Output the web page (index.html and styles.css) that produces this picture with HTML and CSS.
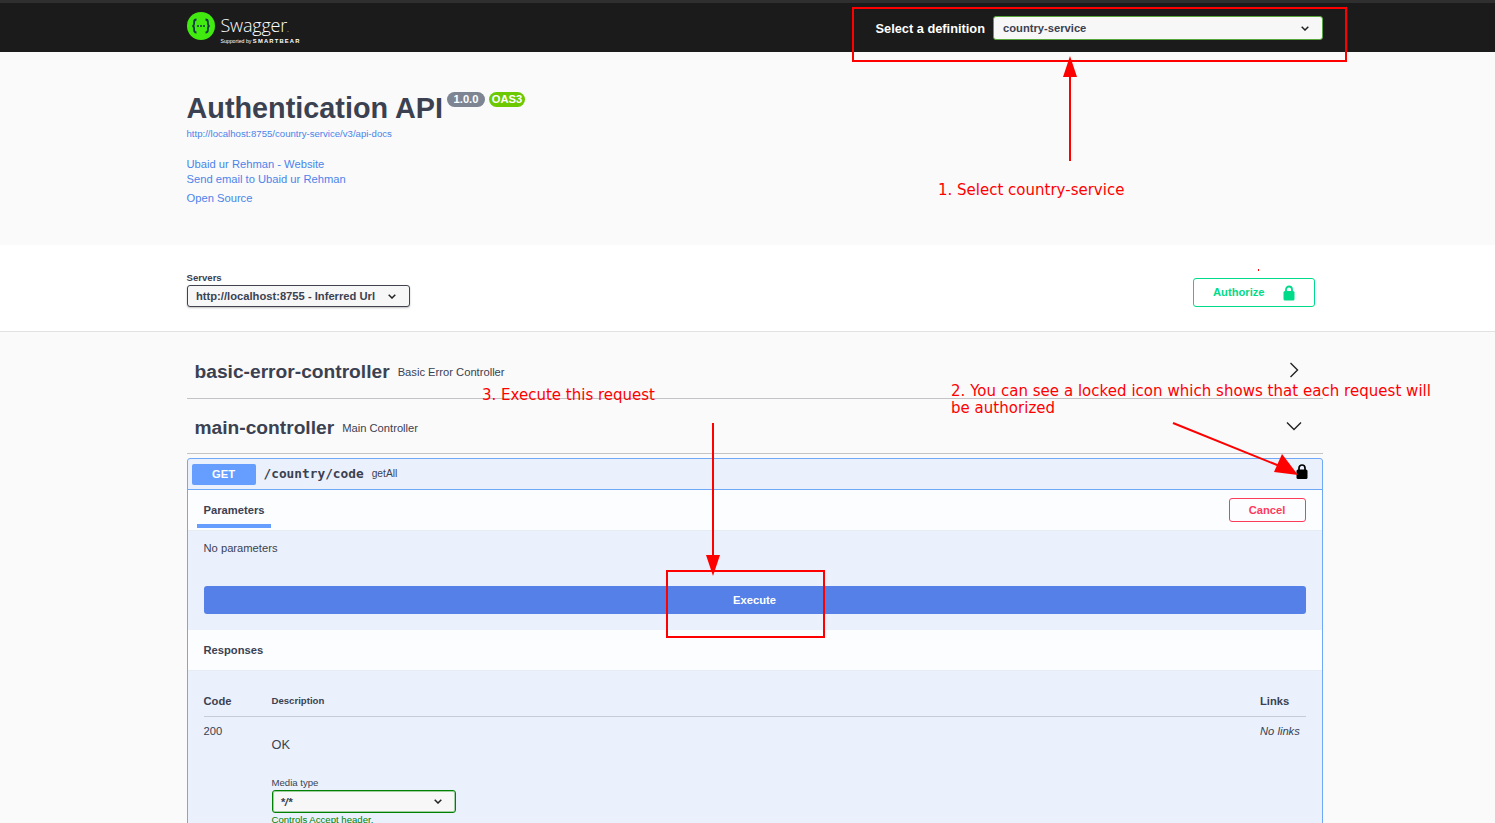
FILE: index.html
```html
<!DOCTYPE html>
<html lang="en">
<head>
    <meta charset="UTF-8">
    <meta name="viewport" content="width=device-width, initial-scale=1.0">
    <title>Swagger UI</title>
    <link rel="stylesheet" href="styles.css">
</head>
<body>
    <div class="page">
        <header class="topbar">
            <div class="wrapper topbar-inner">
                <div class="logo">
                    <svg class="logo-mark" width="28" height="28" viewBox="0 0 28 28">
                        <circle cx="14" cy="14" r="14" fill="#41ea0f"/>
                        <path d="M9.500 7.500c-2 0-2.400 1-2.400 2.500v1.800c0 1.200-.6 2-1.600 2.200 1 .2 1.600 1 1.600 2.200V18c0 1.500.4 2.500 2.400 2.500M18.500 7.500c2 0 2.400 1 2.400 2.500v1.800c0 1.200.6 2 1.600 2.200-1 .2-1.600 1-1.600 2.200V18c0 1.500-.4 2.500-2.400 2.500" fill="none" stroke="#173647" stroke-width="1.800"/>
                        <circle cx="11" cy="14" r="1" fill="#173647"/>
                        <circle cx="14" cy="14" r="1" fill="#173647"/>
                        <circle cx="17" cy="14" r="1" fill="#173647"/>
                    </svg>
                    <div class="logo-text">
                        <span class="logo-name">Swagger<span class="logo-dot">.</span></span>
                        <span class="logo-sub">Supported by <b>SMARTBEAR</b></span>
                    </div>
                </div>
                <div class="definition">
                    <span class="definition-label">Select a definition</span>
                    <div class="select select-definition">
                        <span>country-service</span>
                        <svg class="chevron" width="8" height="5" viewBox="0 0 8 5"><path d="M.7.7L4 4l3.300-3.300" fill="none" stroke="#222" stroke-width="1.500"/></svg>
                    </div>
                </div>
            </div>
        </header>

        <section class="info">
            <div class="wrapper">
                <div class="title-row">
                    <h1 class="title">Authentication API</h1>
                    <span class="badge badge-version">1.0.0</span>
                    <span class="badge badge-oas">OAS3</span>
                </div>
                <a class="link link-url">http://localhost:8755/country-service/v3/api-docs</a>
                <a class="link link-first">Ubaid ur Rehman - Website</a>
                <a class="link">Send email to Ubaid ur Rehman</a>
                <a class="link link-last">Open Source</a>
            </div>
        </section>

        <section class="schemes">
            <div class="wrapper schemes-inner">
                <div class="servers">
                    <span class="servers-label">Servers</span>
                    <div class="select select-server">
                        <span>http://localhost:8755 - Inferred Url</span>
                        <svg class="chevron" width="8" height="5" viewBox="0 0 8 5"><path d="M.7.7L4 4l3.300-3.300" fill="none" stroke="#222" stroke-width="1.500"/></svg>
                    </div>
                </div>
                <button class="btn-authorize">
                    <span>Authorize</span>
                    <svg width="12" height="16" viewBox="0 0 12 16"><path d="M3 7V4.500a3 3 0 0 1 6 0V7" fill="none" stroke="#00db8a" stroke-width="1.800"/><rect x="0.500" y="6" width="11" height="9.500" rx="1.500" fill="#00db8a"/></svg>
                </button>
            </div>
        </section>

        <main class="wrapper tags">
            <div class="tag tag-first">
                <h3 class="tag-name">basic-error-controller</h3>
                <small class="tag-desc">Basic Error Controller</small>
                <svg class="tag-arrow" width="20" height="20" viewBox="0 0 20 20"><path d="M6.500 3l7 7-7 7" fill="none" stroke="#222" stroke-width="1.400"/></svg>
            </div>
            <div class="tag tag-second">
                <h3 class="tag-name">main-controller</h3>
                <small class="tag-desc">Main Controller</small>
                <svg class="tag-arrow" width="20" height="20" viewBox="0 0 20 20"><path d="M3 6.500l7 7 7-7" fill="none" stroke="#222" stroke-width="1.400"/></svg>
            </div>

            <article class="opblock">
                <div class="op-summary">
                    <span class="op-method">GET</span>
                    <span class="op-path">/country/code</span>
                    <span class="op-id">getAll</span>
                    <svg class="op-lock" width="12" height="15" viewBox="0 0 12 15"><path d="M3 7V4a3 3 0 0 1 6 0v3" fill="none" stroke="#000" stroke-width="1.700"/><rect x="0.500" y="5.500" width="11" height="9.500" rx="1.500" fill="#000"/></svg>
                </div>
                <div class="op-section op-section-params">
                    <span class="op-tab">Parameters</span>
                    <button class="btn-cancel">Cancel</button>
                </div>
                <div class="op-body">
                    <p class="no-params">No parameters</p>
                    <button class="btn-execute">Execute</button>
                </div>
                <div class="op-section op-section-responses">
                    <span class="responses-title">Responses</span>
                </div>
                <div class="responses">
                    <div class="resp-head">
                        <span class="col-code">Code</span>
                        <span class="col-desc col-desc-head">Description</span>
                        <span class="col-links">Links</span>
                    </div>
                    <div class="resp-row">
                        <span class="col-code">200</span>
                        <div class="col-desc">
                            <p class="resp-ok">OK</p>
                            <span class="media-label">Media type</span>
                            <div class="select select-media">
                                <span>*/*</span>
                                <svg class="chevron" width="8" height="5" viewBox="0 0 8 5"><path d="M.7.7L4 4l3.300-3.300" fill="none" stroke="#222" stroke-width="1.500"/></svg>
                            </div>
                            <span class="media-note">Controls Accept header.</span>
                        </div>
                        <span class="col-links no-links">No links</span>
                    </div>
                </div>
            </article>
        </main>

        <!-- red notes drawn on top of the screenshot -->
        <svg class="notes-layer" width="1495" height="823" viewBox="0 0 1495 823">
            <g fill="none" stroke="#f00" stroke-width="2">
                <rect x="853" y="8" width="493" height="53"/>
                <rect x="667" y="571" width="157" height="66"/>
                <path d="M1070 161V70"/>
                <path d="M713 423V560"/>
                <path d="M1173 423L1282 467"/>
            </g>
            <g fill="#f00">
                <path d="M1070 56l7 21h-14z"/>
                <path d="M713 576l-7-21h14z"/>
                <path d="M1298 475l-24-3 8-18z"/>
                <rect x="1258" y="269" width="1" height="2"/>
            </g>
        </svg>
        <p class="note note-one">1. Select country-service</p>
        <p class="note note-two">2. You can see a locked icon which shows that each request will be authorized</p>
        <p class="note note-three">3. Execute this request</p>
    </div>
</body>
</html>
```

FILE: styles.css
```css
html, body {
    margin: 0;
    padding: 0;
}
body {
    font-family: "Liberation Sans", Arial, sans-serif;
    background-color: #fafafa;
    color: #3b4151;
}
p, h1, h3 {
    margin: 0;
}
.page {
    position: relative;
    width: 1495px;
    height: 823px;
    overflow: hidden;
}
.wrapper {
    width: 1136px;
    margin-left: 186.500px;
}

/* top bar */
.topbar {
    height: 49px;
    background-color: #1b1b1b;
    border-top: 3px solid #2f2f2f;
}
.topbar-inner {
    display: flex;
    align-items: center;
    justify-content: space-between;
    height: 100%;
}
.logo {
    display: flex;
    align-items: flex-start;
    align-self: flex-start;
    gap: 6px;
    margin-top: 9px;
    color: #fff;
}
.logo-text {
    display: flex;
    flex-direction: column;
    padding-top: 3px;
}
.logo-name {
    font-family: "Open Sans", sans-serif;
    font-size: 18px;
    font-weight: 300;
    line-height: 20px;
    letter-spacing: -0.2px;
}
.logo-dot {
    font-size: 8px;
    line-height: 0;
}
.logo-sub {
    font-size: 5.200px;
    line-height: 7px;
    margin-top: 3px;
    white-space: nowrap;
}
.logo-sub b {
    font-size: 5.800px;
    letter-spacing: 1.200px;
}
.definition {
    display: flex;
    align-items: center;
    gap: 7.500px;
    margin-top: 1px;
}
.definition-label {
    font-size: 12.800px;
    font-weight: bold;
    color: #fff;
}
.select {
    display: flex;
    align-items: center;
    justify-content: space-between;
    box-sizing: border-box;
    background-color: #f7f7f7;
    font-weight: bold;
    color: #3b4151;
    border-radius: 3px;
}
.select-definition {
    width: 330px;
    height: 24px;
    padding: 0 13px 0 9.500px;
    font-size: 11.200px;
    border: 1px solid #56a63c;
}

/* api info */
.info {
    height: 193px;
}
.title-row {
    display: flex;
    align-items: flex-start;
    gap: 4px;
    padding-top: 40px;
    height: 33px;
}
.title {
    font-size: 28.800px;
    line-height: 33px;
    font-weight: bold;
    margin-right: 0;
}
.badge {
    color: #fff;
    font-size: 11.200px;
    font-weight: bold;
    line-height: 15px;
    height: 15px;
    border-radius: 8px;
    text-align: center;
}
.badge-version {
    width: 38px;
    background-color: #7d8492;
}
.badge-oas {
    width: 36px;
    background-color: #6cc900;
}
.link {
    display: block;
    color: #4a84ea;
    font-size: 11.200px;
    line-height: 15px;
}
.link-url {
    font-size: 9.600px;
    line-height: 12px;
    margin-top: 3px;
}
.link-first {
    margin-top: 17px;
}
.link-last {
    margin-top: 4px;
}

/* servers */
.schemes {
    box-sizing: border-box;
    height: 87px;
    background-color: #fff;
    border-bottom: 1px solid #e2e2e2;
}
.schemes-inner {
    display: flex;
    justify-content: space-between;
    width: 1128px;
    padding-top: 27px;
}
.servers {
    display: flex;
    flex-direction: column;
}
.servers-label {
    font-size: 9.600px;
    font-weight: bold;
    line-height: 12px;
    margin-bottom: 1px;
}
.select-server {
    width: 223px;
    height: 22px;
    padding: 0 13px 0 8.500px;
    font-size: 11.200px;
    border: 1px solid #41444e;
    box-shadow: 0 1px 2px rgba(0,0,0,0.25);
}
.btn-authorize {
    display: flex;
    align-items: center;
    justify-content: space-between;
    box-sizing: border-box;
    width: 122px;
    height: 29px;
    margin-top: 6px;
    padding: 0 19px 0 19.500px;
    background: none;
    border: 1px solid #00db8a;
    border-radius: 3px;
    color: #00db8a;
    font-family: inherit;
    font-size: 11.200px;
    font-weight: bold;
}
.btn-authorize span {
    margin-bottom: 2px;
}

/* tags */
.tag {
    display: flex;
    align-items: center;
    box-sizing: border-box;
    position: relative;
    padding-left: 8px;
}
.tag-first {
    height: 67px;
    padding-top: 14px;
    border-bottom: 1px solid #c4c4c6;
}
.tag-second {
    height: 55px;
    padding-top: 4px;
    border-bottom: 1px solid #c4c4c6;
}
.tag-name {
    font-size: 19.200px;
    font-weight: bold;
    line-height: 24px;
}
.tag-desc {
    font-size: 11.200px;
    margin-left: 8px;
}
.tag-arrow {
    position: absolute;
    right: 19px;
}
.tag-first .tag-arrow {
    top: 28px;
}
.tag-second .tag-arrow {
    top: 17px;
}

/* operation */
.opblock {
    box-sizing: border-box;
    height: 400px;
    margin-top: 4px;
    background-color: #eaf1fc;
    border: 1px solid #6ea8f7;
    border-radius: 3px;
}
.op-summary {
    display: flex;
    align-items: center;
    position: relative;
    box-sizing: border-box;
    height: 31px;
    padding-left: 4px;
    border-bottom: 1px solid #6ea8f7;
}
.op-method {
    width: 64px;
    height: 21px;
    line-height: 21px;
    background-color: #659eff;
    border-radius: 2px;
    color: #fff;
    font-size: 11.200px;
    font-weight: bold;
    text-align: center;
}
.op-path {
    margin-left: 8px;
    margin-bottom: 2px;
    font-family: "DejaVu Sans Mono", monospace;
    font-size: 12.800px;
    font-weight: bold;
}
.op-id {
    margin-left: 8px;
    margin-bottom: 2px;
    font-size: 10.240px;
}
.op-lock {
    position: absolute;
    right: 14px;
    top: 5px;
}
.op-section {
    display: flex;
    align-items: center;
    justify-content: space-between;
    box-sizing: border-box;
    height: 41px;
    background-color: #fbfdff;
    font-size: 11.200px;
    font-weight: bold;
}
.op-section-params {
    position: relative;
    padding: 0 16px;
    border-bottom: 1px solid #e6ecf4;
}
.op-tab::after {
    content: "";
    position: absolute;
    left: 9px;
    bottom: 2px;
    width: 74px;
    height: 4px;
    background-color: #659eff;
}
.btn-cancel {
    box-sizing: border-box;
    width: 77px;
    height: 24px;
    padding: 0;
    background: none;
    border: 1px solid #ff3b5c;
    border-radius: 3px;
    color: #ff3b5c;
    font-family: inherit;
    font-size: 11.200px;
    font-weight: bold;
}
.op-body {
    height: 99px;
    padding: 0 16px;
    box-sizing: border-box;
}
.no-params {
    font-size: 11.200px;
    line-height: 14px;
    padding-top: 10px;
}
.btn-execute {
    display: block;
    width: 100%;
    height: 28px;
    margin-top: 31px;
    padding: 0;
    background-color: #5580e8;
    border: none;
    border-radius: 3px;
    color: #fff;
    font-family: inherit;
    font-size: 11.200px;
    font-weight: bold;
}
.op-section-responses {
    padding: 0 16px;
    border-bottom: 1px solid #e6ecf4;
}
.responses {
    padding: 15px 16px 0;
}
.resp-head, .resp-row {
    display: grid;
    grid-template-columns: 68px 1fr 45.500px;
}
.resp-head {
    align-items: center;
    height: 31px;
    padding-bottom: 1px;
    box-sizing: border-box;
    border-bottom: 1px solid #c5ccda;
    font-size: 11.200px;
    font-weight: bold;
}
.col-desc-head {
    font-size: 9.600px;
}
.resp-row {
    padding-top: 7px;
    font-size: 11.200px;
    line-height: 14px;
}
.no-links {
    font-style: italic;
}
.col-links {
    white-space: nowrap;
}
.resp-ok {
    font-size: 12.800px;
    line-height: 16px;
    margin-top: 13px;
}
.media-label {
    display: block;
    font-size: 9.600px;
    line-height: 12px;
    margin-top: 24px;
}
.select-media {
    width: 184px;
    height: 23px;
    margin-top: 1px;
    padding: 0 13px 0 8px;
    font-size: 11.200px;
    font-style: italic;
    border: 1px solid #008000;
    box-shadow: inset 0 0 0 1px rgba(0,128,0,0.35);
}
.media-note {
    display: block;
    font-size: 9.600px;
    line-height: 12px;
    margin-top: 1px;
    color: #008000;
}

/* annotations */
.notes-layer {
    position: absolute;
    left: 0;
    top: 0;
}
.note {
    position: absolute;
    font-family: "DejaVu Sans", sans-serif;
    font-size: 15px;
    line-height: 17px;
    color: #f00;
}
.note-one {
    left: 938px;
    top: 182px;
}
.note-two {
    left: 951px;
    top: 383px;
    width: 500px;
    letter-spacing: 0.030px;
}
.note-three {
    left: 482px;
    top: 387px;
}
```
